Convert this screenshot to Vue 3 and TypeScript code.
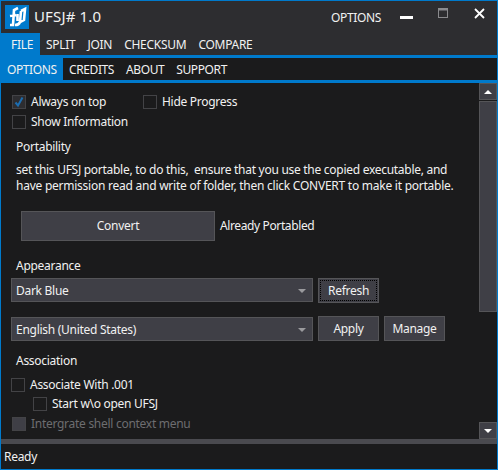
<script setup lang="ts">
const menu = ['SPLIT', 'JOIN', 'CHECKSUM', 'COMPARE']
const subs = ['CREDITS', 'ABOUT', 'SUPPORT']
</script>

<template>
  <div class="win">
    <header class="title">
      <div class="logo">
        <svg width="24" height="24" viewBox="0 0 24 24">
          <rect width="24" height="24" fill="#007acc" />
          <path d="M5 20 L8 20 L9 5 L13 3 M5 11 L11 10 M16 6 L15 17 Q14 20 10 20 M16 6 L20 4 L19 15 L15 17 M12.5 9 L12.5 16" fill="none" stroke="#fff" stroke-width="2.6" />
        </svg>
      </div>
      <span class="app">UFSJ# 1.0</span>
      <span class="opt">OPTIONS</span>
      <svg class="ctl min" width="13" height="3"><rect width="13" height="3" fill="#fff" /></svg>
      <svg class="ctl max" width="10" height="10" viewBox="0 0 10 10">
        <rect x="0.5" y="0.5" width="9" height="9" fill="none" stroke="#8a8a8d" />
        <rect x="0" y="0" width="10" height="2.5" fill="#8a8a8d" />
      </svg>
      <svg class="ctl close" width="11" height="11" viewBox="0 0 11 11">
        <path d="M1 1 L10 10 M10 1 L1 10" stroke="#fff" stroke-width="1.8" />
      </svg>
    </header>

    <nav class="menu">
      <span class="tab on file">FILE</span>
      <span v-for="m in menu" :key="m" class="tab">{{ m }}</span>
    </nav>
    <nav class="sub">
      <span class="stab on">OPTIONS</span>
      <span v-for="s in subs" :key="s" class="stab">{{ s }}</span>
    </nav>

    <div class="body">
      <main class="content">
        <div class="row r1">
          <label class="chk w131"><i class="box checked"><svg width="12" height="12" viewBox="0 0 12 12"><path d="M2.5 6.5 L5 9.5 L9.5 1.5" fill="none" stroke="#1c6db0" stroke-width="2" /></svg></i>Always on top</label>
          <label class="chk"><i class="box"></i>Hide Progress</label>
        </div>
        <div class="row r2"><label class="chk"><i class="box"></i>Show Information</label></div>

        <h3 class="head portability">Portability</h3>
        <p class="desc">set this UFSJ portable, to do this,&nbsp; ensure that you use the copied executable, and<br /><span class="line2">have permission read and write of folder, then click CONVERT to make it portable.</span></p>

        <div class="convert-row">
          <button class="btn convert">Convert</button>
          <span>Already Portabled</span>
        </div>

        <h3 class="head appearance">Appearance</h3>
        <div class="ctl-row first">
          <div class="select"><span>Dark Blue</span><i class="arrow"></i></div>
          <button class="btn act focus">Refresh</button>
        </div>
        <div class="ctl-row second">
          <div class="select"><span>English (United States)</span><i class="arrow"></i></div>
          <button class="btn act">Apply</button>
          <button class="btn act">Manage</button>
        </div>

        <h3 class="head association">Association</h3>
        <div class="row assoc"><label class="chk"><i class="box"></i>Associate With .001</label></div>
        <div class="row start"><label class="chk"><i class="box"></i>Start w\o open UFSJ</label></div>
        <div class="row shell"><label class="chk dis"><i class="box filled"></i>Intergrate shell context menu</label></div>
      </main>

      <aside class="scroll">
        <div class="sbtn"><i class="up"></i></div>
        <div class="thumb"></div>
        <div class="track"></div>
        <div class="sbtn"><i class="down"></i></div>
      </aside>
    </div>

    <div class="hbar"></div>
    <footer class="status">Ready</footer>
  </div>
</template>

<style>
html, body { margin: 0; background: #1b1b1c; }
</style>

<style scoped>
.win {
  width: 498px;
  height: 470px;
  box-sizing: border-box;
  border: 1px solid #007acc;
  background: #1b1b1c;
  color: #f1f1f1;
  font: 12px/16px "Noto Sans", "Open Sans", sans-serif;
  letter-spacing: -0.28px;
  display: flex;
  flex-direction: column;
  overflow: hidden;
}
.title {
  height: 32px;
  flex: none;
  background: #2d2d30;
  display: flex;
  align-items: flex-start;
}
.logo { margin: 4px 0 0 4px; width: 24px; height: 24px; }
.logo svg { display: block; }
.app { margin: 5px 0 0 5px; font-size: 15px; line-height: 20px; letter-spacing: 0.15px; }
.opt { margin: 9px 0 0 auto; line-height: 16px; letter-spacing: -0.35px; }
.ctl { flex: none; display: block; }
.min { margin: 15px 0 0 19px; }
.max { margin: 7px 0 0 25px; }
.close { margin: 7px 12px 0 26px; }
.menu {
  height: 22px;
  flex: none;
  background: #2d2d30;
  display: flex;
}
.tab { line-height: 24px; padding: 0 6px; }
.tab.file { width: 39px; box-sizing: border-box; padding: 0 0 0 10px; }
.on { background: #007acc; }
.sub {
  height: 22px;
  flex: none;
  border-top: 3px solid #007acc;
  border-bottom: 3px solid #007acc;
  background: #1b1b1c;
  display: flex;
}
.stab { line-height: 24px; padding: 0 6px; letter-spacing: -0.4px; }
.stab.on { width: 62px; box-sizing: border-box; padding-left: 6px; }
.body { flex: 1; display: flex; min-height: 0; }
.content { flex: 1; min-width: 0; padding-left: 10px; overflow: hidden; }
.row { display: flex; height: 16px; }
.r1 { margin-top: 11px; padding-left: 1px; }
.r2 { margin-top: 4px; padding-left: 1px; }
.chk { display: flex; align-items: center; white-space: nowrap; }
.w131 { width: 131px; }
.box {
  flex: none;
  width: 12px;
  height: 12px;
  border: 1px solid #434346;
  margin-right: 5px;
  display: block;
}
.box svg { display: block; }
.box.checked { background: #2d2d30; }
.box.filled { background: #3f3f46; }
.dis { color: #6d6d70; }
.head { margin: 0; font-weight: 400; font-size: 12px; line-height: 16px; padding-left: 5px; }
.portability { margin-top: 9px; }
.desc { margin: 7px 0 0; padding-left: 5px; line-height: 16px; white-space: nowrap; }
.line2 { letter-spacing: -0.245px; }
.convert-row { display: flex; align-items: center; margin: 17px 0 0 10px; }
.convert-row span { margin-left: 5px; letter-spacing: -0.38px; }
.btn {
  font: inherit;
  letter-spacing: inherit;
  color: #f1f1f1;
  background: #3f3f46;
  border: 1px solid #555558;
  padding: 0;
  box-sizing: border-box;
  display: block;
}
.convert { width: 194px; height: 30px; }
.appearance { margin-top: 17px; }
.ctl-row { display: flex; gap: 5px; align-items: flex-start; }
.first { margin-top: 4px; }
.second { margin-top: 13px; }
.select {
  width: 302px;
  height: 24px;
  box-sizing: border-box;
  background: #3f3f46;
  border: 1px solid #555558;
  display: flex;
  align-items: center;
  justify-content: space-between;
  padding: 1px 6px 0 4px;
}
.second .select { margin-top: 1px; }
.arrow {
  width: 0;
  height: 0;
  border-left: 4px solid transparent;
  border-right: 4px solid transparent;
  border-top: 4px solid #9a9a9d;
}
.act { width: 61px; height: 25px; }
.focus { position: relative; }
.focus::after {
  content: "";
  position: absolute;
  inset: 1px;
  border: 1px dotted #000;
}
.association { margin-top: 12px; }
.assoc { margin-top: 8px; }
.start { margin-top: 3px; margin-left: 22px; }
.shell { margin-top: 4px; padding-left: 1px; }
.scroll {
  width: 18px;
  flex: none;
  display: flex;
  flex-direction: column;
}
.sbtn {
  height: 17px;
  box-sizing: border-box;
  background: #3f3f46;
  border: 1px solid #555558;
  display: flex;
  align-items: center;
  justify-content: center;
  flex: none;
}
.thumb {
  height: 211px;
  margin-top: 1px;
  flex: none;
  box-sizing: border-box;
  background: #3f3f46;
  border: 1px solid #555558;
}
.track { flex: 1; }
.up { width: 0; height: 0; border-left: 4px solid transparent; border-right: 4px solid transparent; border-bottom: 4px solid #fff; }
.down { width: 0; height: 0; border-left: 4px solid transparent; border-right: 4px solid transparent; border-top: 4px solid #fff; }
.hbar { height: 5px; flex: none; background: #4a4a4f; }
.status { height: 25px; flex: none; line-height: 25px; padding-left: 3px; }
</style>
